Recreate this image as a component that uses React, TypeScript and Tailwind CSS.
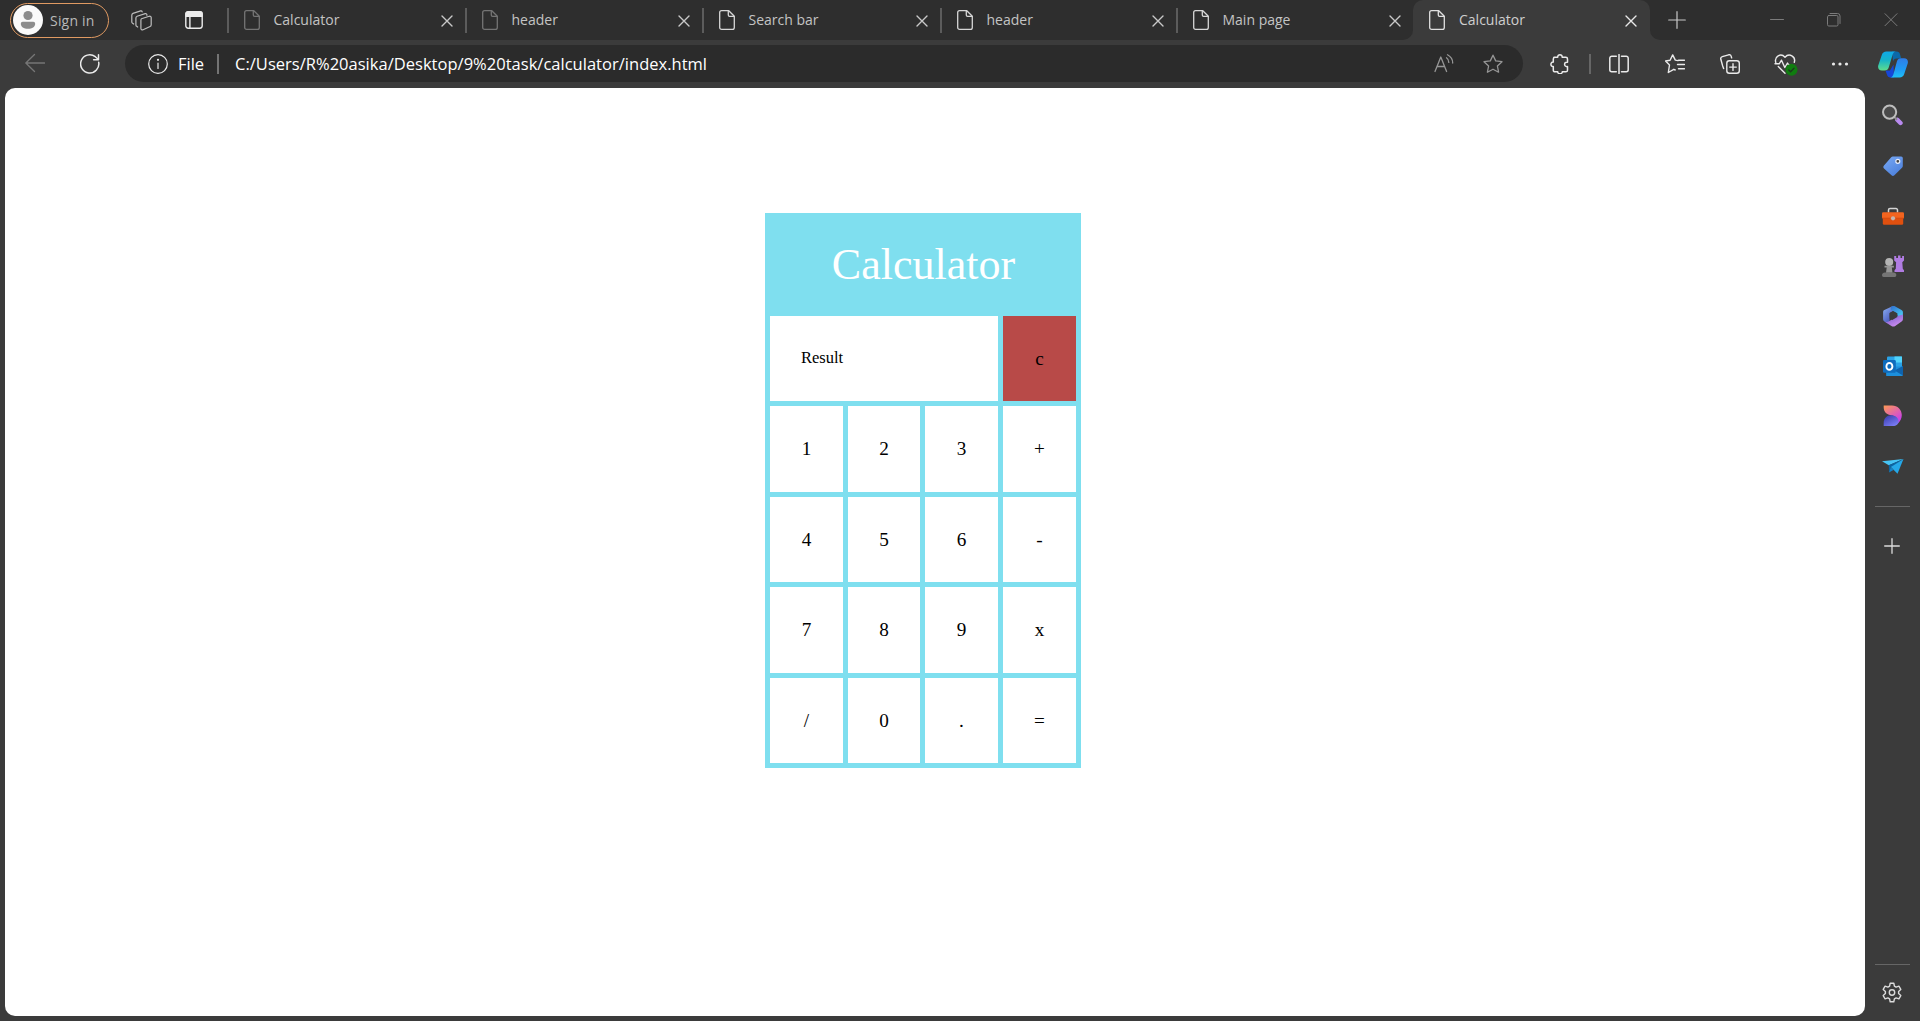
import React from "react";

type IconProps = { w?: number; h?: number; box?: string; className?: string; sw?: number; children: React.ReactNode };

function Icon({ w = 20, h = 20, box, className = "", sw = 1.3, children }: IconProps) {
  return (
    <svg
      width={w}
      height={h}
      viewBox={box ?? `0 0 ${w} ${h}`}
      fill="none"
      stroke="currentColor"
      strokeWidth={sw}
      strokeLinecap="round"
      strokeLinejoin="round"
      className={`block shrink-0 ${className}`}
    >
      {children}
    </svg>
  );
}

const FileIcon = ({ className }: { className: string }) => (
  <Icon w={16} h={20} className={className}>
    <path d="M2.6.7h7.2l5.5 5.5v11.2a1.9 1.9 0 0 1-1.9 1.9H2.6A1.9 1.9 0 0 1 .7 17.4V2.6A1.9 1.9 0 0 1 2.6.7z" />
    <path d="M9.3.9v4.2a1.3 1.3 0 0 0 1.3 1.3h4.4" />
  </Icon>
);

const CloseIcon = ({ className }: { className: string }) => (
  <Icon w={12} h={12} sw={1.4} className={className}>
    <path d="M1 1l10 10M11 1L1 11" />
  </Icon>
);

const Separator = () => <div className="mt-2 h-[25px] w-0.5 shrink-0 bg-[#5c5c5c]" />;

function Tab({ title, width, dim, last }: { title: string; width: string; dim?: boolean; last?: boolean }) {
  return (
    <div className={`flex h-10 shrink-0 ${width}`}>
      <Separator />
      <FileIcon className={dim ? "ml-[14.5px] mt-2.5 text-[#747474]" : "ml-[14.5px] mt-2.5 text-[#d6d6d6]"} />
      <span className="ml-3.5 mt-[10px] flex-1 whitespace-nowrap text-[14px] leading-5 text-[#c4c4c4]">{title}</span>
      <CloseIcon className={last ? "mr-[2.5px] mt-[14.5px] text-[#c9c9c9]" : "mr-[12px] mt-[14.5px] text-[#c9c9c9]"} />
    </div>
  );
}

function TitleBar() {
  return (
    <div className="flex h-10 bg-[#2e2e2e] text-[#d0d0d0]">
      <div className="ml-[10px] mt-[3px] flex h-[35px] w-[99px] shrink-0 items-center rounded-full border border-[#e09a62] pl-[2px]">
        <Icon w={30} h={30} className="-mt-px text-transparent">
          <circle cx="15" cy="15" r="15" fill="#fafafa" />
          <circle cx="15" cy="10.5" r="4.6" fill="#8c8c8c" />
          <path d="M9.7 16.8h10.6a1.9 1.9 0 0 1 1.9 1.900c0 3-3 5-7.200 5s-7.200-2-7.200-5a1.900 1.900 0 0 1 1.900-1.900z" fill="#8c8c8c" />
        </Icon>
        <span className="ml-[7px] -mt-px whitespace-nowrap text-[14px] tracking-[0.2px] text-[#b9b9b9]">Sign in</span>
      </div>
      <Icon w={21} h={21} className="ml-[22px] mt-[9.5px] text-[#bdbdbd]" sw={1.2}>
        <path d="M10.500 8.800l7.700-2.500c1.200-.3 2 .3 2 1.300v7.200c0 .8-.4 1.400-1.100 1.700l-7 3.200c-1.100.4-2.200 0-2.200-1.200v-8c0-.9.100-1.500.6-1.700z" />
        <path d="M6.700 17l-1-.7c-.6-.3-.8-.8-.8-1.400V8c0-1 .4-1.500 1.200-1.800l8.100-2.600c.8-.2 1.500.2 1.700 1V5.300" />
        <path d="M2.700 14l-1.100-.8C1 12.900.8 12.500.8 12V5.200c0-1 .4-1.500 1.200-1.800L9.600.9c.8-.2 1.400.1 1.600.9" />
      </Icon>
      <Icon w={18} h={18} className="ml-[33px] mt-[11px] text-[#ececec]" sw={1.4}>
        <rect x=".8" y=".8" width="16.4" height="16.4" rx="2.4" />
        <path d="M1 2.500Q1 1 2.500 1h13Q17 1 17 2.500V5.200H1z" fill="currentColor" />
        <path d="M4.900 5v12" />
      </Icon>
      <div className="ml-6 flex">
        <Tab title="Calculator" width="w-[238px]" dim />
        <Tab title="header" width="w-[237px]" dim />
        <Tab title="Search bar" width="w-[238px]" />
        <Tab title="header" width="w-[236px]" />
        <Tab title="Main page" width="w-[227px]" last />
      </div>
      <div className="flex w-[10px] shrink-0 items-end bg-[#3b3b3b]">
        <div className="h-10 w-full rounded-br-[10px] bg-[#2e2e2e]" />
      </div>
      <div className="flex w-[237px] shrink-0 bg-[#2e2e2e]">
        <div className="flex h-10 w-full rounded-t-[10px] bg-[#3b3b3b]">
          <FileIcon className="ml-4 mt-2.5 text-[#e0e0e0]" />
          <span className="ml-3.5 mt-[10px] flex-1 whitespace-nowrap text-[14px] leading-5 text-[#cfcfcf]">Calculator</span>
          <CloseIcon className="mr-[13px] mt-[14.5px] text-[#e8e8e8]" />
        </div>
      </div>
      <div className="w-[10px] shrink-0 bg-[#3b3b3b]">
        <div className="h-full rounded-bl-[10px] bg-[#2e2e2e]" />
      </div>
      <Icon w={18} h={18} className="ml-2 mt-[10.5px] text-[#c8c8c8]" sw={1.2}>
        <path d="M9 .7v16.600M.7 9h16.600" />
      </Icon>
      <Icon w={14} h={14} className="ml-[84px] mt-[12px] text-[#7b7b7b]" sw={1}>
        <path d="M.5 7.500h13" />
      </Icon>
      <Icon w={14} h={14} className="ml-[43px] mt-[13px] text-[#7b7b7b]" sw={1}>
        <rect x=".5" y="2.500" width="10.500" height="10.500" rx="1.300" />
        <path d="M3 .5h7.500a2.500 2.500 0 0 1 2.500 2.500v7.500" />
      </Icon>
      <Icon w={14} h={14} className="ml-[43px] mt-[13px] text-[#7b7b7b]" sw={1}>
        <path d="M1 .7l12 12M13 .7l-12 12" />
      </Icon>
    </div>
  );
}

const STAR = "M10 1.200l2.700 5.700 6.300.8-4.600 4.300 1.200 6.200L10 15.200l-5.600 3 1.200-6.200L1 7.700l6.300-.8z";

function Toolbar() {
  return (
    <div className="flex h-12 items-center bg-[#3b3b3b] text-[#eaeaea]">
      <Icon className="ml-[25px] -mt-[2px] text-[#767676]">
        <path d="M19.500 10H.8M9.500 1.500L.8 10l8.700 8.500" />
      </Icon>
      <Icon className="ml-[35px]" sw={1.5}>
        <path d="M18.700 8.300A9.100 9.100 0 1 1 15.300 2.700L18.200 5.200" />
        <path d="M18.500.8v4.900h-4.900" />
      </Icon>
      <div className="ml-[25px] mt-[-1px] flex h-[37px] w-[1398px] shrink-0 items-center rounded-full bg-[#2b2b2b]">
        <Icon className="ml-[22.5px]" sw={1.2}>
          <circle cx="10" cy="10" r="9.300" />
          <path d="M10 9v5.500" />
          <circle cx="10" cy="5.800" r=".5" fill="currentColor" />
        </Icon>
        <span className="ml-[10.5px] w-[39px] shrink-0 whitespace-nowrap text-[16.5px] leading-5 text-white">File</span>
        <div className="h-5 w-0.5 bg-[#747474]" />
        <span className="ml-4 flex-1 whitespace-nowrap text-[16.5px] leading-5 tracking-[0.02px] text-white">
          C:/Users/R%20asika/Desktop/9%20task/calculator/index.html
        </span>
        <Icon className="mr-[29px] text-[#969696]">
          <path d="M1 17.500L6.800 3l5.800 14.500M3 12.500h7.600" />
          <path d="M12.500 3.800c1.500 1 2.300 2.600 2.300 4.600M13.500.8c3.400 1.800 5.200 4.700 5.200 8.200" />
        </Icon>
        <Icon className="mr-[20.5px] text-[#969696]">
          <path d={STAR} />
        </Icon>
      </div>
      <Icon className="ml-[27px] mr-[-1px]" sw={1.5}>
        <path d="M4 3.200h3.700c-.3-3.200 4.800-3.200 4.500 0h3.600c1 0 1.700.7 1.700 1.700v3.300c-3.900-.7-3.900 5 0 4.400v3.600c0 .9-.7 1.600-1.700 1.600h-3.500c.3 2.600-4.900 2.600-4.600 0H5c-1 0-1.700-.7-1.700-1.600v-3.700c-3.200.4-3.200-4.700 0-4.400V4.900c0-1 .3-1.700 1.700-1.700" />
      </Icon>
      <div className="ml-5 h-5 w-0.5 shrink-0 bg-[#666]" />
      <Icon className="ml-[18px]" sw={1.5}>
        <path d="M7.300 2.200H2.800a2 2 0 0 0-2 2v11.600a2 2 0 0 0 2 2h4.500M12.500 2.200h4.700a2 2 0 0 1 2 2v11.600a2 2 0 0 1-2 2h-4.700M10 .5v19" />
      </Icon>
      <Icon className="ml-9" sw={1.4}>
        <path d="M13 6.600l-2.700-.5L7.700.9 5.100 6.300.6 7l3.900 4-1.200 7.500 5.500-3.200 1.400.7M13.500 6.300h6M12.500 10.500h7M13.500 14.700h6" />
      </Icon>
      <Icon className="ml-[35px]" sw={1.4}>
        <rect x="6.8" y="6.8" width="12.5" height="12.5" rx="2.5" />
        <path d="M13 9.800v6.600M9.700 13.100h6.600M3.600 14.600L2.700 12 .8 5.300c-.3-1.200.3-2.200 1.500-2.600L8.600.8c1.200-.3 2.300.3 2.600 1.500l.4 1.500" />
      </Icon>
      <Icon w={24} h={22} className="ml-[34px] mt-0.5" sw={1.4}>
        <path d="M1.800 8.500C0 2.700 6.800-1.500 11 3.300 15.200-1.500 22 2.700 20.300 8.300M4.300 12.600l6.700 6.600M1 9.800h4.200l2.300-3.600 3.300 7.300 2.700-4.500 1 1.600h3.800" />
        <circle cx="17.500" cy="15.800" r="6" fill="#107c10" stroke="none" />
        <path d="M14.800 16l1.800 1.700 3.400-3.500" stroke="#1d3a1d" />
      </Icon>
      <Icon w={18} h={6} className="ml-[33px]">
        <g fill="currentColor" stroke="none">
          <circle cx="2.500" cy="3" r="1.600" />
          <circle cx="9" cy="3" r="1.600" />
          <circle cx="15.500" cy="3" r="1.600" />
        </g>
      </Icon>
      <Icon w={30} h={27} className="ml-[29px]">
        <defs>
          <linearGradient id="cpA" x1="0" y1="0" x2="0" y2="1">
            <stop offset="0" stopColor="#0fa8e8" />
            <stop offset=".45" stopColor="#16b3c9" />
            <stop offset="1" stopColor="#5fdd8c" />
          </linearGradient>
          <linearGradient id="cpB" x1="0" y1="0" x2="0" y2="1">
            <stop offset="0" stopColor="#2f7de8" />
            <stop offset=".6" stopColor="#1e9cf5" />
            <stop offset="1" stopColor="#20bff5" />
          </linearGradient>
        </defs>
        <g stroke="none">
          <path d="M14 .5h4.500c2 0 3 1 3.500 2.800l1.200 4.200h-4.600c-2 0-3 1-3.500 3z" fill="#0b69a8" />
          <path d="M7.500 19.400h4.500l3.500-6 .5 13h-3.500c-2 0-3-.8-3.600-2.800z" fill="#1647d8" />
          <path d="M8.500.5H18c-2 0-2.800 1.300-3.400 3.200l-3.800 12.500c-.7 2.200-1.900 3.300-4.300 3.300H4c-3.200 0-4.500-2.500-3.700-5.300L3.700 4.300C4.500 1.700 6 .5 8.500.5z" fill="url(#cpA)" />
          <path d="M21.500 26.500H12c2 0 2.800-1.300 3.400-3.200l3.500-12.700c.7-2.200 2-3.300 4.300-3.300H26c3.200 0 4.500 2.500 3.700 5.300l-3.400 10.100c-.8 2.600-2.300 3.800-4.800 3.800z" fill="url(#cpB)" />
        </g>
      </Icon>
    </div>
  );
}

const SearchGlyph = () => (
  <>
    <path d="M15.300 15.800l3.200 3.200" stroke="#b98af0" strokeWidth="4.400" />
    <path d="M12.500 13.200l2 2" stroke="#8b8b8b" strokeWidth="2" />
    <circle cx="7.600" cy="8.100" r="6.600" stroke="#bdbdbd" strokeWidth="2" fill="#4a4a4a" />
  </>
);

const TagGlyph = () => (
  <>
    <path d="M10.800 1.500h8.400a1.600 1.600 0 0 1 1.600 1.600v8c0 .7-.3 1.300-.8 1.700l-7.600 7.400c-.9.900-2 .9-2.900 0L2 13.400c-.9-.9-.9-2 0-2.900l7.200-8.300c.4-.5 1-.7 1.600-.7z" fill="url(#tagFill)" stroke="none" />
    <circle cx="15.800" cy="6.300" r="2" fill="#444" stroke="#e6ecfa" strokeWidth="1.200" />
  </>
);

const ToolboxGlyph = () => (
  <>
    <path d="M6.500 7V5A1.500 1.500 0 0 1 8 3.500h6A1.500 1.500 0 0 1 15.500 5v2" stroke="#d4d4d4" strokeWidth="1.500" />
    <g stroke="none">
      <rect x=".8" y="10" width="20.400" height="9.700" rx="1.300" fill="#e0500f" />
      <rect x="0" y="7.200" width="22" height="6.300" rx="1.200" fill="#f2641f" />
      <path d="M0 13.200h22" stroke="#c5420b" strokeWidth=".7" />
      <circle cx="11" cy="13.300" r="2.100" fill="#c4b5ae" />
    </g>
  </>
);

const ChessGlyph = () => (
  <g stroke="none">
    <path d="M12.200 1h2v2h1.800V.6h2.500V3h1.600V1H22v4.500l-1.700 1.700.5 6.600 1.200 1.500V17h-9.500v-1.700l1.300-1.500.3-6.600-1.900-1.700z" fill="#b07ce2" />
    <circle cx="7.200" cy="7" r="4" fill="#b4b4b4" />
    <path d="M2.500 10.800h9.400v1.600H9.800l.7 5.400H4l.7-5.400H2.500z" fill="#969696" />
    <path d="M3 17.500h8.600c1.600 0 2.700 1.100 2.700 2.600 0 1.200-.6 1.900-1.400 1.900H1.500C.6 22 0 21.300 0 20.100c0-1.500 1.300-2.600 3-2.600z" fill="#757575" />
  </g>
);

const OfficeGlyph = () => (
  <g stroke="none">
    <path d="M8.800 1.900L11.500 1v4.800L7.600 8v7.500l-1.400 3-3.800-2.100A2.500 2.500 0 0 1 1.100 14.200V7.200c0-1 .5-1.800 1.300-2.200z" fill="url(#ofA)" />
    <path d="M8.700 1.900c1.500-1 3.200-1.200 4.600-.4l6.200 3.600c.9.500 1.400 1.300 1.400 2.300v6.400l-5.700-3.300V8.200L8.700 4.700z" fill="url(#ofB)" />
    <path d="M20.900 9.500v4.800c0 1-.5 1.700-1.300 2.200l-6.400 4.400c-1.200.7-2.600.7-3.800 0l-7-4.400c1.600.6 3.200.5 4.600-.3l8.400-5.200z" fill="url(#ofC)" />
    <path d="M11 6.200l4.300 2.400v3.300l-5 3.100-2.700-1.600V8z" fill="#3b3b3b" />
  </g>
);

const OutlookGlyph = () => (
  <>
    <g stroke="none">
      <rect x="5" y="1.500" width="15" height="12" rx="1" fill="#2aa3e8" />
      <rect x="12.500" y="1.500" width="7.500" height="6" fill="#50d3fb" />
      <path d="M4 11.500h17v8.200a1.200 1.200 0 0 1-1.200 1.200H4.200z" fill="#1c8fdc" />
      <path d="M21 11v9.500l-8.500-5z" fill="#0f62ac" />
      <rect x="1" y="5" width="12.800" height="12.800" rx="1.200" fill="#0f6cbd" />
    </g>
    <ellipse cx="7.400" cy="11.400" rx="3" ry="3.400" stroke="#fff" strokeWidth="1.900" />
  </>
);

const DesignerGlyph = () => (
  <g stroke="none">
    <path d="M1.700.4H10c5.500 0 9.800 4.200 9.800 9.600 0 3.300-1.300 6-3.800 8.300.4-4.300-2.200-7.500-6.300-7.900C4.800 9.900 1.700 7.100 1.700 2.600z" fill="url(#dsA)" />
    <path d="M1.700 21v-3c0-4.700 3.100-7.800 7.300-7.800s7.600 2.600 7.600 6.300c0 2.700-2.300 4.500-5.800 4.500z" fill="url(#dsB)" />
  </g>
);

const PlaneGlyph = () => (
  <g stroke="none">
    <path d="M0 6.300L21.500 4 6.800 10.300z" fill="#47c5f5" />
    <path d="M6.800 10.300L21.500 4 8.800 12.500 7 17.500z" fill="#0a64a4" />
    <path d="M8.800 12L21.500 4l-6 14.700z" fill="#25a8e8" />
    <path d="M7 17.500l1.800-5.500 2.700 3z" fill="#1483c9" />
  </g>
);

const GLYPHS = [SearchGlyph, TagGlyph, ToolboxGlyph, ChessGlyph, OfficeGlyph, OutlookGlyph, DesignerGlyph, PlaneGlyph];

const GRADIENTS: [string, string, string][] = [
  ["tagFill", "#7aaaf5", "#4c80dc"],
  ["ofA", "#8fb4f5", "#4250b8"],
  ["ofB", "#2f6fd0", "#4bd0f5"],
  ["ofC", "#6a56c8", "#cf8df0"],
  ["dsA", "#ff9a52", "#c83cf0"],
  ["dsB", "#3438a8", "#7a7cf5"],
];

function Sidebar() {
  return (
    <div className="flex w-[55px] shrink-0 flex-col items-center bg-[#3b3b3b] text-[#dcdcdc]">
      <svg width="0" height="0" className="block">
        <defs>
          {GRADIENTS.map(([id, from, to]) => (
            <linearGradient key={id} id={id} x1="0" y1="0" x2=".7" y2="1">
              <stop offset="0" stopColor={from} />
              <stop offset="1" stopColor={to} />
            </linearGradient>
          ))}
        </defs>
      </svg>
      <div className="mt-4 flex flex-col gap-7">
        {GLYPHS.map((Glyph, i) => (
          <Icon key={i} w={22} h={22} className={i === 0 ? "mb-px" : ""}>
            <Glyph />
          </Icon>
        ))}
      </div>
      <div className="mt-[29px] h-px w-[35px] bg-[#666]" />
      <Icon w={16} h={16} className="mr-px mt-[31px]">
        <path d="M8 .7v14.600M.7 8h14.600" />
      </Icon>
      <div className="mt-auto h-px w-[35px] bg-[#666]" />
      <Icon w={22} h={22} className="mb-[17px] mr-px mt-[17px]" sw={1.4}>
        <path d="M9.200 1.200h3.600l.6 2.900 1.700 1 2.800-.9 1.900 3.200-2.200 2v2.200l2.200 2-1.900 3.200-2.800-.9-1.700 1-.6 2.900H9.200l-.6-2.900-1.700-1-2.800.9-1.900-3.200 2.200-2V9.400l-2.200-2 1.900-3.200 2.800.9 1.700-1z" />
        <circle cx="11" cy="10.500" r="2.700" />
      </Icon>
    </div>
  );
}

const KEYS = ["1", "2", "3", "+", "4", "5", "6", "-", "7", "8", "9", "x", "/", "0", ".", "="];

function Calculator() {
  return (
    <div className="ml-[760px] mt-[125px] h-[555px] w-[316px] bg-[#7fdfef] font-['Liberation_Serif',serif] text-black">
      <h1 className="h-[103px] pl-px pt-[27px] text-center text-[44px] leading-[50px] text-white">Calculator</h1>
      <div className="grid grid-cols-[73px_72px_73px_73px] grid-rows-[85px_86px_85px_86px_85px] gap-[5px] px-[5px]">
        <div className="col-span-3 flex items-center bg-white pl-[31px] text-[16.5px]">Result</div>
        <div className="flex items-center justify-center bg-[#b84a48] pt-px text-[19.2px]">c</div>
        {KEYS.map((k) => (
          <div key={k} className="flex items-center justify-center bg-white pt-px text-[19.2px]">
            {k}
          </div>
        ))}
      </div>
    </div>
  );
}

export default function App() {
  return (
    <div className="flex h-[1021px] w-[1920px] flex-col overflow-hidden bg-[#3b3b3b] font-['Open_Sans',sans-serif]">
      <TitleBar />
      <Toolbar />
      <div className="flex flex-1">
        <main className="mb-[5px] ml-[5px] w-[1860px] shrink-0 overflow-hidden rounded-[10px] bg-white">
          <div className="flow-root">
            <Calculator />
          </div>
        </main>
        <Sidebar />
      </div>
    </div>
  );
}
